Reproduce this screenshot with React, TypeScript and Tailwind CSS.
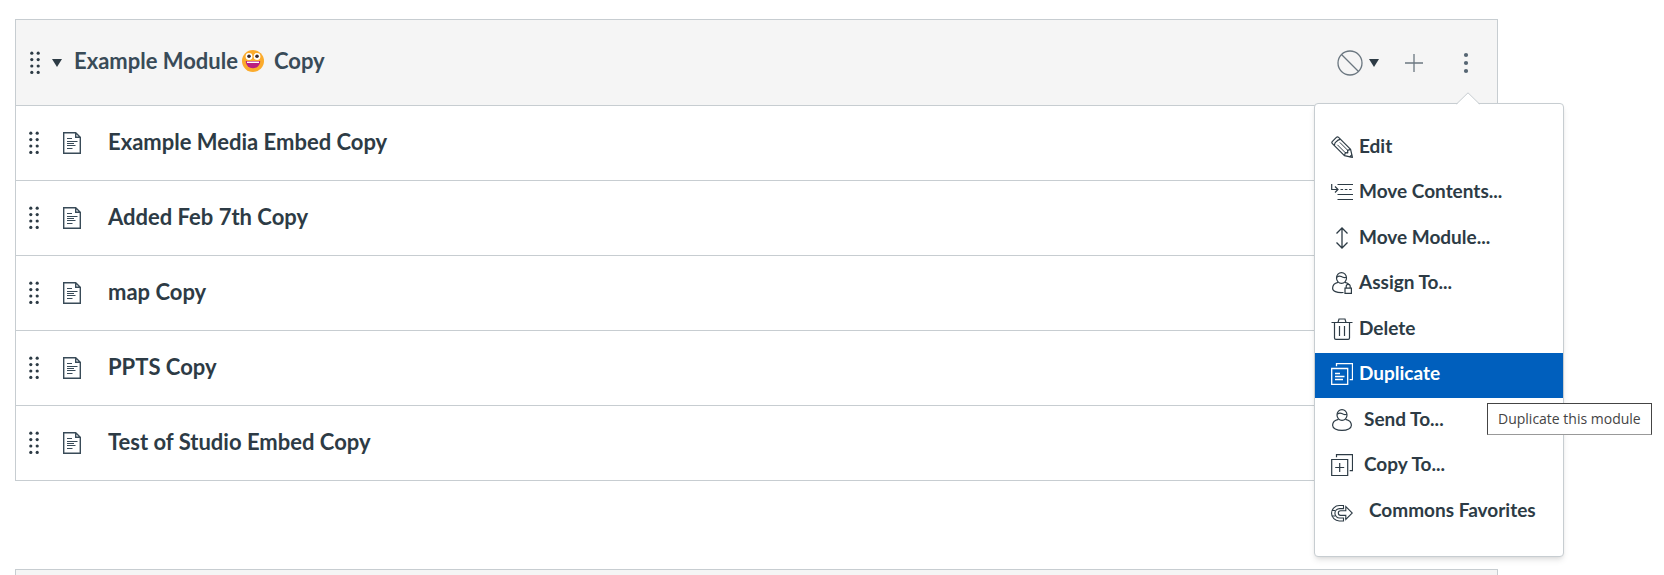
import React from 'react';

type IconProps = { className?: string };

const PencilIcon: React.FC<IconProps> = ({ className }) => (
  <svg viewBox="0 0 22 22" className={className} fill="none" stroke="currentColor" strokeWidth="1.2" strokeLinejoin="round" aria-hidden="true">
    <path d="M1.2 5.6 5.6 1.2q1-.8 2 .2L19.600 13.4 21.400 21.400 13.400 19.600 1.400 7.600q-1-1-.2-2Z" />
    <path d="M3.400 9.200Q3.600 6.800 5.400 5.600 6.800 3.800 9.200 3.400" />
    <path d="M6.400 8.800 14.400 16.800M8.800 6.400 16.800 14.400" strokeWidth="1" />
    <path d="M13.400 19.600l1-3 2.400.200-.2-2.400 3-1M18.600 21l2.400-2.400" />
  </svg>
);

const MoveContentsIcon: React.FC<IconProps> = ({ className }) => (
  <svg viewBox="0 0 22 22" className={className} fill="none" stroke="currentColor" strokeWidth="1.2" aria-hidden="true">
    <path d="M.7 3v5.5h6M4 5.5l3 3-3 3" />
    <path d="M6.5 3.5H22M6.5 13.5H22M6.5 18.5H22" />
    <path d="M9.5 8.5H22" strokeDasharray="2.6 1.7" />
  </svg>
);

const MoveModuleIcon: React.FC<IconProps> = ({ className }) => (
  <svg viewBox="0 0 22 22" className={className} fill="none" stroke="currentColor" strokeWidth="1.3" aria-hidden="true">
    <path d="M11 1v20M5.5 6.5 11 1l5.5 5.5M5.5 15.5 11 21l5.5-5.5" />
  </svg>
);

const UserIcon: React.FC<IconProps> = ({ className }) => (
  <svg viewBox="0 0 22 22" className={className} fill="none" stroke="currentColor" strokeWidth="1.2" aria-hidden="true">
    <ellipse cx="11" cy="6" rx="5" ry="5.4" />
    <path d="M6.2 5.2C8 3.8 9.5 3.8 10.8 4.6S14 6 15.8 5.2" />
    <path d="M7.5 10.3C4 11 1.6 13 1.6 16.2c0 3 4 5.2 9.4 5.2s9.4-2.2 9.4-5.2c0-3.2-2.4-5.2-5.9-5.9" />
  </svg>
);

const UserLockIcon: React.FC<IconProps> = ({ className }) => (
  <svg viewBox="0 0 22 22" className={className} fill="none" stroke="currentColor" strokeWidth="1.2" aria-hidden="true">
    <ellipse cx="10.5" cy="6" rx="5" ry="5.4" />
    <path d="M5.7 5.2C7.5 3.8 9 3.8 10.3 4.6S13.5 6 15.3 5.2" />
    <path d="M7 10.3C3.8 11 1.6 13 1.6 16.2c0 3 4 4.8 10.9 4.3M14 10.3c2 .4 3.4 1.3 4.4 2.5" />
    <path d="M14 16.2h6.4v5.2H14zM15.2 16v-1.6a2 2 0 0 1 4 0V16" />
  </svg>
);

const TrashIcon: React.FC<IconProps> = ({ className }) => (
  <svg viewBox="0 0 22 22" className={className} fill="none" stroke="currentColor" strokeWidth="1.2" aria-hidden="true">
    <path d="M.5 4.5h21M7 4.3 8 1h6l1 3.3M3.5 4.5v15.5q0 1.4 1.4 1.4h12.2q1.4 0 1.4-1.4V4.5" />
    <path d="M8.5 8v10M13.5 8v10" />
  </svg>
);

const DuplicateIcon: React.FC<IconProps> = ({ className }) => (
  <svg viewBox="0 0 22 22" className={className} fill="none" stroke="currentColor" strokeWidth="1.3" aria-hidden="true">
    <path d="M.7 5.5h16v16H.7zM5.5 3.3V.7h16v16h-2.8" />
    <path d="M4 10.5h5M4 13.5h9.5M4 16.5h8" />
  </svg>
);

const CopyToIcon: React.FC<IconProps> = ({ className }) => (
  <svg viewBox="0 0 22 22" className={className} fill="none" stroke="currentColor" strokeWidth="1.2" aria-hidden="true">
    <path d="M.7 5.5h16v16H.7zM5.5 3.3V.7h16v16h-2.8" />
    <path d="M4.2 13.5h9M8.7 9v9" />
  </svg>
);

const CommonsIcon: React.FC<IconProps> = ({ className }) => (
  <svg viewBox="0 0 22 22" className={className} fill="none" stroke="currentColor" strokeWidth="1.1" aria-hidden="true">
    <path d="M13 5.5H8.3a7.5 7.5 0 0 0 0 15.500H12.500v-3H8.600a4.600 4.600 0 0 1 0-9.400H12.500V5.500" />
    <path d="M14.800 10.800V6.600L21.300 13l-6.500 6.400v-4H9.600a2.200 2.200 0 0 1 0-4.600z" />
    <path d="M1 10.5h3M.8 16h3.4" />
  </svg>
);

const DocumentIcon: React.FC<IconProps> = ({ className }) => (
  <svg viewBox="0 0 18 22" className={className} fill="none" stroke="currentColor" strokeWidth="1.4" aria-hidden="true">
    <path d="M.7.7h12l4.600 4.600v16H.7zM12.700.7v4.600h4.600" />
    <path d="M4 6.500h5M4 9.500h10.500M4 11.500h7M4 13.500h8.500M4 16.500h5.500" strokeWidth="1" />
  </svg>
);

const DragHandle: React.FC = () => (
  <button type="button" aria-label="Reorder" className="flex h-6 w-[10px] cursor-move items-center text-[#2d3b45]">
    <svg viewBox="0 0 10 24" className="h-6 w-[10px]" fill="currentColor" aria-hidden="true">
      {[2.2, 8.6, 15, 21.4].map((y) => (
        <g key={y}>
          <circle cx="1.8" cy={y} r="1.6" />
          <circle cx="8.2" cy={y} r="1.6" />
        </g>
      ))}
    </svg>
  </button>
);

const Caret: React.FC<IconProps> = ({ className }) => (
  <svg viewBox="0 0 10 8" className={className} fill="currentColor" aria-hidden="true">
    <path d="M0 0h10L5 8z" />
  </svg>
);

const GrinEmoji: React.FC = () => (
  <svg viewBox="0 0 22 22" className="ml-1 inline-block size-[22px]" role="img" aria-label="grinning face">
    <circle cx="11" cy="11" r="11" fill="#fbab2c" />
    <circle cx="7" cy="6.5" r="3.4" fill="#fff" />
    <circle cx="15" cy="6.5" r="3.4" fill="#fff" />
    <circle cx="7" cy="6.3" r="1.8" fill="#3b2a2a" />
    <circle cx="15" cy="6.3" r="1.8" fill="#3b2a2a" />
    <path d="M3.8 11h14.4c0 4.200-3 7.200-7.200 7.200s-7.200-3-7.200-7.200z" fill="#bb1d80" />
    <path d="M5 11.600h12v1.400H5z" fill="#fff" />
  </svg>
);

const moduleItems = [
  'Example Media Embed Copy',
  'Added Feb 7th Copy',
  'map Copy',
  'PPTS Copy',
  'Test of Studio Embed Copy',
];

const menuItems = [
  { label: 'Edit', Icon: PencilIcon, gap: 'gap-[6px]' },
  { label: 'Move Contents...', Icon: MoveContentsIcon, gap: 'gap-[6px]' },
  { label: 'Move Module...', Icon: MoveModuleIcon, gap: 'gap-[6px]' },
  { label: 'Assign To...', Icon: UserLockIcon, gap: 'gap-[6px]' },
  { label: 'Delete', Icon: TrashIcon, gap: 'gap-[6px]' },
  { label: 'Duplicate', Icon: DuplicateIcon, gap: 'gap-[6px]', active: true },
  { label: 'Send To...', Icon: UserIcon, gap: 'gap-[11px]' },
  { label: 'Copy To...', Icon: CopyToIcon, gap: 'gap-[11px]' },
  { label: 'Commons Favorites', Icon: CommonsIcon, gap: 'gap-4' },
];

const ModuleMenu: React.FC = () => (
  <div className="absolute top-[83px] -right-[67px] z-10 w-[250px] rounded-[4px] border border-[#c7cdd1] bg-white pt-[22px] pb-[21px] shadow-md">
    <svg viewBox="0 0 24 13" className="absolute -top-3 right-[83px] h-[13px] w-6" aria-hidden="true">
      <path d="M0 13 12 1l12 12z" fill="#fff" />
      <path d="M.5 12 12 .8 23.5 12" fill="none" stroke="#c7cdd1" />
    </svg>
    <ul>
      {menuItems.map(({ label, Icon, gap, active }) => (
        <li key={label} className="relative even:mb-px">
          <button
            type="button"
            className={`flex h-[45px] w-full items-center pb-1 pl-4 text-[19px] font-bold whitespace-nowrap ${gap} ${
              active ? 'bg-[#005fbd] text-white' : 'text-[#2d3b45]'
            }`}
          >
            <Icon className="size-[22px] shrink-0" />
            <span>{label}</span>
          </button>
          {active && (
            <div
              role="tooltip"
              className="absolute top-[50px] left-[172px] z-20 border border-[#444] border-b-[#999] bg-white px-[10px] py-[5px] font-['Open_Sans',sans-serif] text-[14px] leading-5 whitespace-nowrap text-[#444]"
            >
              Duplicate this module
            </div>
          )}
        </li>
      ))}
    </ul>
  </div>
);

const App: React.FC = () => {
  return (
    <main className="flex min-h-screen flex-col bg-white pt-[19px] pr-[166px] pl-[15px] font-[Lato,sans-serif] text-[#2d3b45]">
      <section className="border border-[#c7cdd1]">
        <header className="relative flex h-[85px] items-center bg-[#f5f5f5] pl-[14px]">
          <DragHandle />
          <button type="button" aria-label="Collapse module" className="ml-3">
            <Caret className="h-2 w-[10px]" />
          </button>
          <h2 className="ml-3 flex items-center pb-1 text-[22px] font-bold text-[#394b58]">
            <span>Example Module</span>
            <GrinEmoji />
            <span className="ml-[10px]">Copy</span>
          </h2>

          <div className="ml-auto flex items-center pr-[27px] text-[#6b7780]">
            <button type="button" aria-label="Unpublished" className="flex items-center gap-[6px]">
              <svg viewBox="0 0 26 26" className="size-[26px]" fill="none" stroke="currentColor" strokeWidth="1.3" aria-hidden="true">
                <circle cx="13" cy="13" r="12" />
                <path d="M4.5 4.5l17 17" />
              </svg>
              <Caret className="h-2 w-[10px] text-[#2d3b45]" />
            </button>
            <button type="button" aria-label="Add item" className="ml-[26px]">
              <svg viewBox="0 0 18 18" className="size-[18px]" stroke="currentColor" strokeWidth="1.3" aria-hidden="true">
                <path d="M9 0v18M0 9h18" />
              </svg>
            </button>
            <button type="button" aria-label="Manage module" aria-expanded="true" className="ml-[39px]">
              <svg viewBox="0 0 8 22" className="h-[22px] w-2" fill="#556572" aria-hidden="true">
                <circle cx="4" cy="3" r="2.1" />
                <circle cx="4" cy="11" r="2.1" />
                <circle cx="4" cy="19" r="2.1" />
              </svg>
            </button>
          </div>
          <ModuleMenu />
        </header>

        <ul>
          {moduleItems.map((title) => (
            <li key={title} className="flex h-[75px] items-center border-t border-[#c7cdd1] pl-[13px]">
              <DragHandle />
              <DocumentIcon className="ml-6 h-[22px] w-[18px] text-[#394b58]" />
              <a href="#" className="ml-[27px] pb-1 text-[22px] font-bold">
                {title}
              </a>
            </li>
          ))}
        </ul>
      </section>

      <section className="mt-[88px] flex-1 border border-b-0 border-[#c7cdd1] bg-[#f5f5f5]" />
    </main>
  );
};

export default App;
